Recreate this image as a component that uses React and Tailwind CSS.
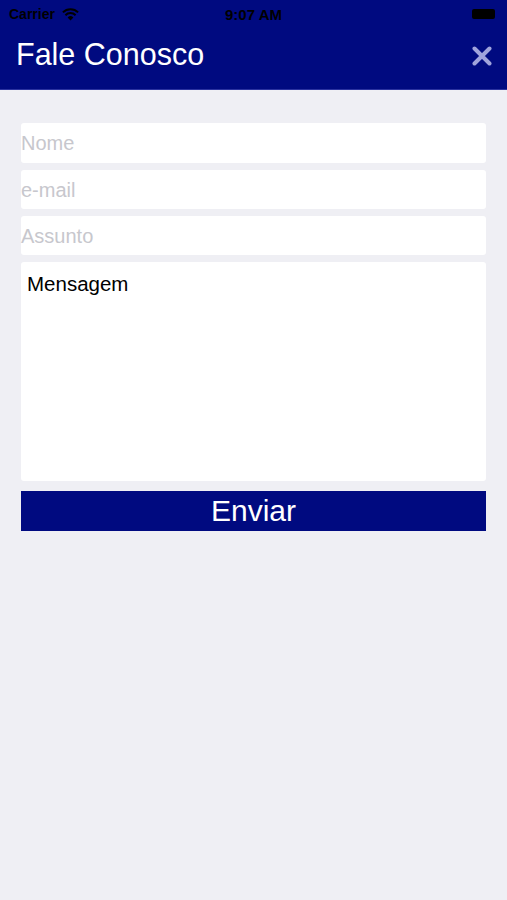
export default function App() {
  const font = { fontFamily: '"Liberation Sans", Arial, sans-serif' }
  return (
    <div className="w-[507px] h-[900px] bg-[#efeff4] flex flex-col" style={font}>
      {/* Header */}
      <div className="bg-[#000a80] h-[90px] flex flex-col border-b border-[#2a32a0]">
        <div className="h-[28px] flex items-center justify-between px-[9px] relative text-black">
          <div className="flex items-center gap-[7px]">
            <span className="text-[14px] font-semibold leading-none">Carrier</span>
            <svg width="17" height="13" viewBox="0 0 17 13">
              <path d="M8.5 12.5 L5.6 9.4 A4.2 4.2 0 0 1 11.4 9.4 Z" fill="#000" />
              <path d="M3.4 7.2 A7.3 7.3 0 0 1 13.6 7.2" stroke="#000" strokeWidth="2" fill="none" />
              <path d="M0.9 4.4 A10.8 10.8 0 0 1 16.1 4.4" stroke="#000" strokeWidth="2" fill="none" />
            </svg>
          </div>
          <span className="absolute left-[225px] text-[15px] font-bold leading-none">9:07 AM</span>
          <div className="w-[23px] h-[10px] bg-black rounded-[2px] mr-[3px]" />
        </div>
        <div className="flex-1 flex items-center justify-between pl-[16px] pr-[15px] pb-[8px]">
          <h1 className="text-white text-[30.5px] leading-none">Fale Conosco</h1>
          <svg width="20" height="20" viewBox="0 0 20 20" className="mt-[2px]">
            <path d="M2.5 2.5 L17.5 17.5 M17.5 2.5 L2.5 17.5" stroke="#a0a4dc" strokeWidth="4" strokeLinecap="round" />
          </svg>
        </div>
      </div>

      {/* Form */}
      <div className="px-[21px] pt-[33px] flex flex-col gap-[7px]">
        {['Nome', 'e-mail', 'Assunto'].map((p, i) => (
          <div key={p} className={`${i === 0 ? 'h-[40px]' : 'h-[39px]'} bg-white rounded-[3px] flex items-center text-[20px] text-[#c7c7cd]`}>
            {p}
          </div>
        ))}
        <div className="h-[219px] bg-white rounded-[3px] px-[6px] pt-[7px] text-[20.5px] text-black">
          Mensagem
        </div>
        <button className="mt-[3px] h-[40px] bg-[#000a80] text-white text-[30px] leading-none flex items-center justify-center">
          Enviar
        </button>
      </div>
    </div>
  )
}
